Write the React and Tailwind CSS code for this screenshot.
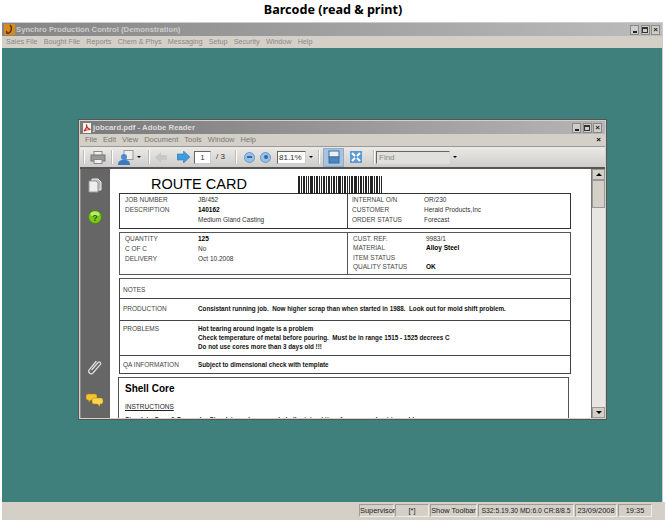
import React from "react";

const sans = "font-['Liberation_Sans',Arial,sans-serif]";

const bars = [2,1,1,1,2,1,1,1,1,1,3,1,1,1,2,1,1,1,1,1,2,1,1,1,2,1,1,1,2,1,1,1,3,1,1,1,2,1,1,1,1,1,2,1,3,1,1,1,2,1,1,1,2,1,1,1,3,1,1,1,2,1,1,1,1,1,3,1,2];

const Barcode = () => {
  let x = 0;
  return (
    <svg width="85" height="18" viewBox="0 0 85 18" className="shrink-0">
      {bars.map((w, i) => {
        const rect = i % 2 === 0 ? <rect key={i} x={x} y="0" width={w} height="18" fill="#222" /> : null;
        x += w;
        return rect;
      })}
    </svg>
  );
};

const WinButtons = () => (
  <div className="flex gap-[1.5px]">
    <span className="w-[9px] h-[10px] bg-[#cfcdc8] border border-[#8a8a8a] flex items-end justify-center"><span className="w-[4px] h-[1.5px] bg-[#222] mb-[1px]" /></span>
    <span className="w-[9px] h-[10px] bg-[#cfcdc8] border border-[#8a8a8a] flex items-center justify-center"><span className="w-[6px] h-[6px] border border-[#333] border-t-2" /></span>
    <span className="w-[9px] h-[10px] bg-[#cfcdc8] border border-[#8a8a8a] text-[8px] leading-[8px] text-center font-bold text-[#222]">×</span>
  </div>
);

const Field = ({ label, value, bold, labelWidth = "w-[73px]", h = "h-[10px]" }) => (
  <div className={`flex items-center ${h}`}>
    <span className={`shrink-0 text-[#444] ${labelWidth}`}>{label}</span>
    <span className={bold ? "font-bold text-black" : "text-[#333]"}>{value}</span>
  </div>
);

const NoteRow = ({ label, lines, className }) => (
  <div className={`flex border-t border-[#444] pl-[3px] ${className}`}>
    <span className="w-[75px] shrink-0 text-[#444]">{label}</span>
    <div className="font-bold text-[#111] leading-[9px] text-[6.300px]">
      {lines.map((l) => <div key={l}>{l}</div>)}
    </div>
  </div>
);

const Sidebar = () => (
  <div className="w-[30px] shrink-0 bg-[#666] border-l border-[#888] flex flex-col items-center pt-[9px] pr-[2px]">
    <svg width="14" height="15" viewBox="0 0 14 15">
      <path d="M4 1h6l3 3v8H4z" fill="#bbb" stroke="#eee" />
      <path d="M1 3h7l2 2v9H1z" fill="#eee" stroke="#999" />
    </svg>
    <svg width="14" height="14" viewBox="0 0 14 14" className="mt-[17px]">
      <circle cx="7" cy="7" r="6.500" fill="#7ec81c" stroke="#4c8a10" />
      <ellipse cx="7" cy="4" rx="4.500" ry="2.500" fill="#bdea6a" />
      <text x="7" y="10.500" textAnchor="middle" fontSize="9" fontWeight="bold" fill="#2c5c08" fontFamily="Liberation Sans">?</text>
    </svg>
    <svg width="16" height="16" viewBox="0 0 16 16" className="mt-[135px]" fill="none">
      <path d="M5 10.500 11 3.500c1.500-1.500 3.500.5 2.200 2.200L6 14c-2 2-5.500-.5-3.800-3.200L9 2.500" stroke="#ddd" strokeWidth="1.300" strokeLinecap="round" />
    </svg>
    <svg width="17" height="14" viewBox="0 0 17 14" className="mt-[18px]">
      <path d="M2 1h7q2 0 2 2v2q0 2-2 2H5L2.500 9V7H2Q0 7 0 5V3q0-2 2-2z" fill="#f4c430" stroke="#a87a0b" strokeWidth=".5" />
      <path d="M8 5h7q2 0 2 2v2q0 2-2 2h-1v2.500L11.500 11H8q-2 0-2-2V7q0-2 2-2z" fill="#fbd648" stroke="#a87a0b" strokeWidth=".5" />
    </svg>
  </div>
);

const ToolSep = () => <span className="block w-[2px] h-[14px] bg-[#bbb] border-r border-white" />;

const Circle = ({ plus }) => (
  <span className="w-[11px] h-[11px] rounded-full bg-[#9cc0e4] border border-[#6b97c8] flex items-center justify-center">
    <span className={plus ? "w-[4px] h-[4px] rounded-full bg-[#2a69b8]" : "w-[5px] h-[2px] bg-[#2a69b8]"} />
  </span>
);

const Caret = () => <span className="block w-0 h-0 border-x-[2px] border-x-transparent border-t-[2px] border-t-black" />;

const Toolbar = () => (
  <div className="h-[21px] flex items-center pl-[3px] border-t border-[#999] bg-gradient-to-b from-[#eceae6] to-[#cfcdc9] text-[8px] text-[#333]">
    <ToolSep />
    <svg width="16" height="13" viewBox="0 0 16 13" className="ml-[5px]">
      <rect x="4" y="0.500" width="8" height="4" fill="#f0f0f0" stroke="#888" />
      <rect x="1" y="4" width="14" height="6" fill="#999" stroke="#777" />
      <rect x="4" y="8.500" width="8" height="4" fill="#f0f0f0" stroke="#888" />
    </svg>
    <span className="ml-[5px]"><ToolSep /></span>
    <svg width="17" height="15" viewBox="0 0 17 15" className="ml-[5px]">
      <rect x="6" y="0.500" width="9" height="9" fill="#eee" stroke="#999" />
      <circle cx="6" cy="7" r="3" fill="#4a8ad0" />
      <path d="M0 15c0-4 2-5 6-5s6 1 6 5z" fill="#3a78c0" />
    </svg>
    <span className="ml-[2px]"><Caret /></span>
    <span className="ml-[7px]"><ToolSep /></span>
    <svg width="12" height="11" viewBox="0 0 12 11" className="ml-[5px]"><path d="M0 5.500 6 0v3h6v5H6v3z" fill="#c8c8c8" /></svg>
    <svg width="13" height="12" viewBox="0 0 13 12" className="ml-[10px]"><path d="M13 6 6.500 0v3H0v6h6.500v3z" fill="#3d9be0" stroke="#2a6fae" strokeWidth=".5" /></svg>
    <span className="ml-[4px] w-[17px] h-[13px] bg-white border border-[#666] border-r-[#ccc] border-b-[#ccc] text-center leading-[11px]">1</span>
    <span className="ml-[5px] w-[14px]">/ 3</span>
    <span className="ml-[5px]"><ToolSep /></span>
    <span className="ml-[7px]"><Circle /></span>
    <span className="ml-[5px]"><Circle plus /></span>
    <span className="ml-[6px] w-[29px] h-[13px] bg-white border border-[#666] border-r-[#ccc] border-b-[#ccc] pl-[1px] leading-[11px]">81.1%</span>
    <span className="ml-[3px]"><Caret /></span>
    <span className="ml-[5px]"><ToolSep /></span>
    <span className="ml-[3px] w-[21px] h-[19px] bg-[#a9c3dc] border border-[#8fadc8] flex items-center justify-center">
      <svg width="12" height="14" viewBox="0 0 12 14"><rect x="1" y="1" width="10" height="6" fill="#eee" stroke="#3a6ea5" /><rect x="1" y="7" width="10" height="6" fill="#4c86c0" stroke="#3a6ea5" /></svg>
    </span>
    <svg width="12" height="12" viewBox="0 0 12 12" className="ml-[6px]"><rect width="12" height="12" fill="#5c9ad8" /><path d="M2 2l3 3M10 2 7 5M2 10l3-3M10 10 7 7" stroke="#fff" strokeWidth="2" /></svg>
    <span className="ml-[11px]"><ToolSep /></span>
    <span className="ml-[1px] w-[74px] h-[13px] bg-[#e2e0dc] border border-[#666] border-r-[#ddd] border-b-[#ddd] text-[#888] pl-[2px] leading-[11px]">Find</span>
    <span className="ml-[3px]"><Caret /></span>
  </div>
);

const Scrollbar = () => (
  <div className="w-[14px] shrink-0 bg-[#e8e6e2] border-l border-[#777] flex flex-col">
    <span className="h-[11px] bg-[#d4d0c8] border border-[#999] flex items-center justify-center"><span className="w-0 h-0 border-x-[3px] border-x-transparent border-b-[3px] border-b-black" /></span>
    <span className="h-[28px] bg-[#d4d0c8] border border-[#999]" />
    <span className="flex-1" />
    <span className="h-[11px] bg-[#d4d0c8] border border-[#999] flex items-center justify-center"><span className="w-0 h-0 border-x-[3px] border-x-transparent border-t-[3px] border-t-black" /></span>
  </div>
);

const Page = () => (
  <div className="flex-1 min-w-0 bg-white overflow-hidden pl-[9px] text-[6.5px] leading-[10px]">
    <div className="flex h-[24px] items-start">
      <span className="ml-[32px] mt-[7px] text-[14.5px] leading-[16px] text-black">ROUTE CARD</span>
      <span className="ml-[51px] mt-[7px]"><Barcode /></span>
    </div>
    <div className="w-[452px] h-[36px] border border-[#333] flex">
      <div className="w-[228px] border-r border-[#444] pl-[5px] pt-[1px]">
        <Field label="JOB NUMBER" value="JB/452" />
        <Field label="DESCRIPTION" value="140162" bold />
        <Field label="" value="Medium Gland Casting" />
      </div>
      <div className="flex-1 pl-[4px] pt-[1px]">
        <Field label="INTERNAL O/N" value="OR/230" labelWidth="w-[72px]" />
        <Field label="CUSTOMER" value="Herald Products,Inc" labelWidth="w-[72px]" />
        <Field label="ORDER STATUS" value="Forecast" labelWidth="w-[72px]" />
      </div>
    </div>
    <div className="mt-[3px] w-[452px] h-[43px] border border-[#555] flex">
      <div className="w-[228px] border-r border-[#555] pl-[5px] pt-[1px]">
        <Field label="QUANTITY" value="125" bold />
        <Field label="C OF C" value="No" />
        <Field label="DELIVERY" value="Oct 10.2008" />
      </div>
      <div className="flex-1 pl-[5px] pt-[1px]">
        <Field label="CUST. REF." value="9983/1" h="h-[9.500px]" />
        <Field label="MATERIAL" value="Alloy Steel" bold h="h-[9.500px]" />
        <Field label="ITEM STATUS" value="" h="h-[9.500px]" />
        <Field label="QUALITY STATUS" value="OK" bold h="h-[9.500px]" />
      </div>
    </div>
    <div className="mt-[3px] w-[452px] border border-[#444] border-t-[#555] [&>div:first-child]:border-t-0">
      <NoteRow label="NOTES" lines={[]} className="h-[19px] pt-[6px]" />
      <NoteRow label="PRODUCTION" lines={["Consistant running job.  Now higher scrap than when started in 1988.  Look out for mold shift problem."]} className="h-[22px] pt-[5px] whitespace-pre" />
      <NoteRow label="PROBLEMS" lines={["Hot tearing around ingate is a problem", "Check temperature of metal before pouring.  Must be in range 1515 - 1525 decrees C", "Do not use cores more than 3 days old !!!"]} className="h-[35px] pt-[3px] whitespace-pre" />
      <NoteRow label="QA INFORMATION" lines={["Subject to dimensional check with template"]} className="h-[18px] pt-[4px]" />
    </div>
    <div className="mt-[3px] -ml-[1px] w-[451px] h-[60px] border border-[#555] pl-[6px] pt-[5px]">
      <div className="text-[10px] leading-[12px] font-bold text-black">Shell Core</div>
      <div className="mt-[7px] text-[#222] underline">INSTRUCTIONS</div>
      <div className="mt-[3px] font-bold text-[#222] whitespace-pre">Simulate Core &amp; Dry under Simulate and use sand shell minimal time for cure and get to mold.</div>
    </div>
  </div>
);

const AppWindow = () => (
  <div className={`w-[527px] h-[299px] border border-[#d4d0c8] outline outline-1 outline-[#555] flex flex-col ${sans}`}>
    <div className="h-[13px] shrink-0 bg-gradient-to-r from-[#7b7b7b] to-[#b5b5b5] flex items-center justify-between pl-[2px] pr-[3px]">
      <div className="flex items-center gap-[1px] text-[#ddd] text-[7.800px] font-bold">
        <svg width="10" height="10" viewBox="0 0 10 10"><rect x="1" y="0" width="8" height="10" fill="#f4f0ec" /><path d="M2 8C4 6 5 3 4.500 1.500 4.500 4 6.500 6 8.500 6.500 6 6.500 4 7 2 8z" fill="none" stroke="#c8281e" strokeWidth="1.200" /></svg>
        jobcard.pdf - Adobe Reader
      </div>
      <WinButtons />
    </div>
    <div className="h-[12px] shrink-0 bg-[#d4d0c8] flex items-center justify-between pl-[5px] pr-[4px] text-[7.5px] text-[#777]">
      <div className="flex gap-[6px]">
        {["File", "Edit", "View", "Document", "Tools", "Window", "Help"].map((m) => <span key={m}>{m}</span>)}
      </div>
      <span className="font-bold text-black text-[8px] leading-none">×</span>
    </div>
    <Toolbar />
    <div className="flex-1 min-h-0 flex border-t-2 border-[#555]">
      <Sidebar />
      <Page />
      <Scrollbar />
    </div>
  </div>
);

const StatusCell = ({ children, className }) => (
  <span className={`h-[13px] whitespace-nowrap border border-t-[#a09c94] border-l-[#a09c94] border-r-[#efece6] border-b-[#efece6] text-center leading-[11px] ${className}`}>{children}</span>
);

export default function App() {
  return (
    <div className={`w-[666px] h-[520px] bg-white flex flex-col overflow-hidden ${sans}`}>
      <div className="h-[22px] shrink-0 text-center text-[12.600px] font-bold leading-[20px] text-black font-['Noto_Sans',sans-serif]">Barcode (read &amp; print)</div>
      <div className="flex-1 min-h-0 ml-[2px] mr-[3px] border-t border-[#ccc] border-r border-[#555] flex flex-col">
        <div className="h-[13px] shrink-0 bg-gradient-to-r from-[#858585] to-[#bcbcbc] flex items-center justify-between pl-[2px] pr-[2px]">
          <div className="flex items-center gap-[1px] text-[#ccc] text-[7.700px] font-bold">
            <svg width="11" height="11" viewBox="0 0 11 11"><rect width="11" height="11" fill="#d98a1e" /><path d="M6 1C8 3 8 7 5 9 3 10 2 8 3 7" fill="none" stroke="#5a3208" strokeWidth="1.500" /></svg>
            Synchro Production Control (Demonstration)
          </div>
          <WinButtons />
        </div>
        <div className="h-[12px] shrink-0 bg-[#d4d0c8] flex items-center pl-[4px] text-[7.200px] text-[#888] gap-[6.200px]">
          {["Sales File", "Bought File", "Reports", "Chem & Phys", "Messaging", "Setup", "Security", "Window", "Help"].map((m) => <span key={m}>{m}</span>)}
        </div>
        <div className="flex-1 min-h-0 bg-[#3f7f7c] pl-[77px] pt-[72px]">
          <AppWindow />
        </div>
      </div>
      <div className="h-[18px] shrink-0 ml-[2px] mr-[1px] pt-[2px] bg-[#d4d0c8] flex items-start justify-end gap-[1px] pr-[13px] text-[7.400px] text-[#222]">
        <StatusCell className="w-[35px]">Supervisor</StatusCell>
        <StatusCell className="w-[34px]">[*]</StatusCell>
        <StatusCell className="w-[47px]">Show Toolbar</StatusCell>
        <StatusCell className="w-[96px] text-[6.800px]">S32:5.19.30 MD:6.0 CR:8/8.5</StatusCell>
        <StatusCell className="w-[42px]">23/09/2008</StatusCell>
        <StatusCell className="w-[34px]">19:35</StatusCell>
      </div>
    </div>
  );
}
